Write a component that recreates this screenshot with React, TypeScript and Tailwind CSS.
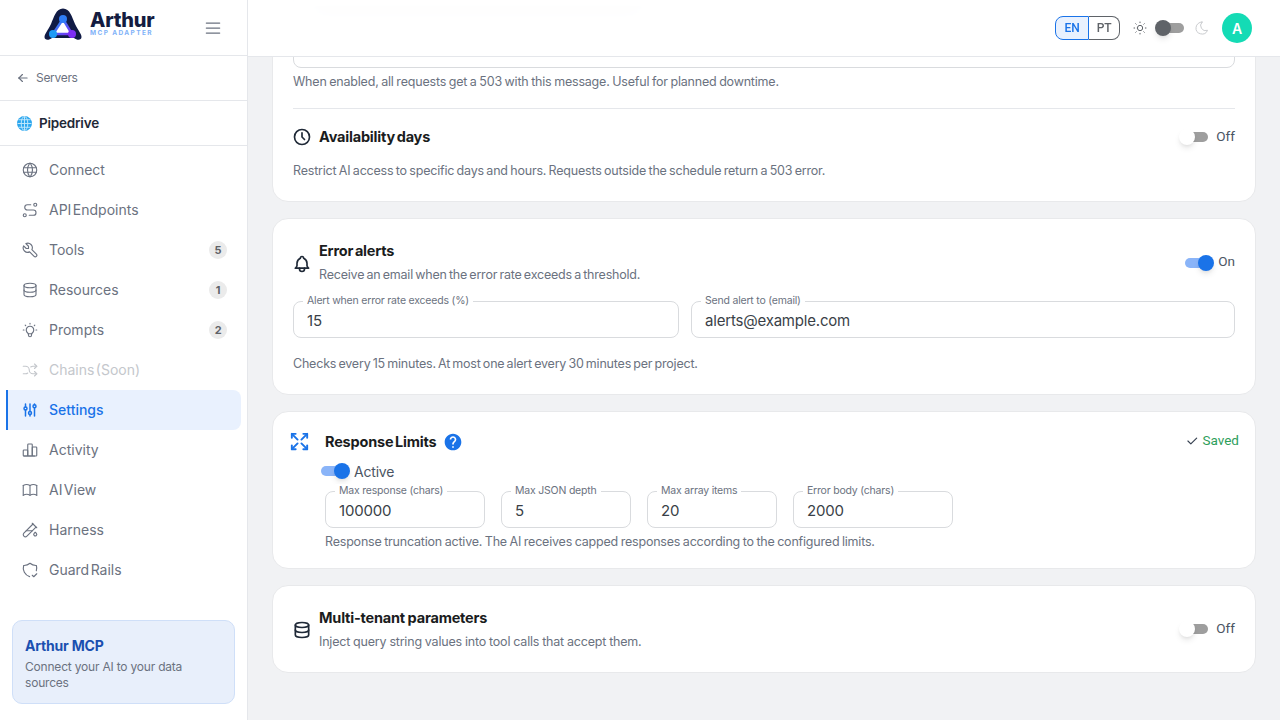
import { MdHelp } from "react-icons/md";
import {
  TbAdjustments,
  TbArrowLeft,
  TbArrowsMaximize,
  TbArrowsShuffle,
  TbBell,
  TbBook,
  TbBulb,
  TbChartBar,
  TbCheck,
  TbClock,
  TbDatabase,
  TbMenu2,
  TbMoon,
  TbRoute,
  TbShieldCheck,
  TbSun,
  TbTestPipe,
  TbTool,
  TbWorld,
} from "react-icons/tb";

const NAV = [
  { label: "Connect", icon: TbWorld },
  { label: "API Endpoints", icon: TbRoute },
  { label: "Tools", icon: TbTool, badge: 5 },
  { label: "Resources", icon: TbDatabase, badge: 1 },
  { label: "Prompts", icon: TbBulb, badge: 2 },
  { label: "Chains (Soon)", icon: TbArrowsShuffle, disabled: true },
  { label: "Settings", icon: TbAdjustments, active: true },
  { label: "Activity", icon: TbChartBar },
  { label: "AI View", icon: TbBook },
  { label: "Harness", icon: TbTestPipe },
  { label: "Guard Rails", icon: TbShieldCheck },
];

function Logo() {
  return (
    <div className="flex items-center gap-2 mb-[8px]">
      <svg width="38" height="32" viewBox="0 0 38 32">
        <defs>
          <linearGradient id="logo-edge" x1="0" y1="0" x2="1" y2="1">
            <stop offset="0" stopColor="#1e9bf5" />
            <stop offset="1" stopColor="#7c2df5" />
          </linearGradient>
        </defs>
        <path d="M0.5 29C0.5 26 4 22 7 16C10 9 12 0.5 19 0.5C26 0.5 28 9 31 16C34 22 37.5 26 37.5 29C37.5 32.5 33 32.5 30 30H8C5 32.5 0.5 32.5 0.5 29Z" fill="#101b45" />
        <path d="M19 11L9 26H28Z" fill="#fff" stroke="url(#logo-edge)" strokeWidth="2.5" />
        <circle cx="19" cy="11" r="4" fill="#2f7df6" />
        <circle cx="9" cy="26" r="4" fill="#1e9bf5" />
        <circle cx="28" cy="26" r="4" fill="#7c2df5" />
      </svg>
      <div className="flex flex-col">
        <span className="text-[20px] leading-[19px] font-extrabold text-[#141c40]">Arthur</span>
        <span className="text-[6.5px] leading-[7px] font-bold tracking-[1.4px] text-[#7fb2f8]">MCP ADAPTER</span>
      </div>
    </div>
  );
}

function Sidebar() {
  return (
    <aside className="w-[248px] h-full shrink-0 bg-white border-r border-[#e5e7eb] flex flex-col">
      <div className="h-14 shrink-0 border-b border-[#e5e7eb] flex items-center pl-11 pr-[24px] justify-between">
        <Logo />
        <TbMenu2 className="w-5 h-5 text-[#6b7280]" strokeWidth={1.5} />
      </div>
      <div className="h-[45px] shrink-0 border-b border-[#e5e7eb] flex items-center gap-[6px] pl-[16px] text-[12px] tracking-[-0.3px] text-[#6b7280]">
        <TbArrowLeft className="w-[14px] h-[14px]" />
        <span>Servers</span>
      </div>
      <div className="h-[45px] shrink-0 border-b border-[#e5e7eb] flex items-center gap-[7px] pl-[17px]">
        <svg width="15" height="15" viewBox="0 0 16 16" fill="none" stroke="#c4e9fc" strokeWidth="1">
          <circle cx="8" cy="8" r="8" fill="#2ba6ee" stroke="none" />
          <ellipse cx="8" cy="8" rx="3.5" ry="7.5" />
          <path d="M8 0.5V15.5M0.5 8H15.5M1.8 4H14.2M1.8 12H14.2" />
        </svg>
        <span className="text-[13.5px] font-semibold text-[#1f2937]">Pipedrive</span>
      </div>
      <nav className="flex flex-col pt-[4px] pl-[6px] pr-[6px]">
        {NAV.map((item) => {
          const Icon = item.icon;
          return (
            <div
              key={item.label}
              className={
                item.active
                  ? "h-10 flex items-center gap-[10px] pl-[13px] pr-[14px] bg-[#e9f1fe] rounded-r-lg border-l-2 border-[#1a73e8] text-[#1a73e8] font-medium"
                  : item.disabled
                    ? "h-10 flex items-center gap-[10px] pl-[15px] pr-[14px] text-[#c4c7cc]"
                    : "h-10 flex items-center gap-[10px] pl-[15px] pr-[14px] text-[#6b7280]"
              }
            >
              <Icon className="w-[18px] h-[18px] shrink-0" strokeWidth={item.active ? 2 : 1.5} />
              <span className="text-[14px] flex-1 whitespace-nowrap mb-[1px] tracking-normal [word-spacing:-2.5px]">{item.label}</span>
              {item.badge && (
                <span className="w-[18px] h-[18px] rounded-full bg-[#ebebeb] text-[11px] font-bold text-[#5f6368] flex items-center justify-center">
                  {item.badge}
                </span>
              )}
            </div>
          );
        })}
      </nav>
      <div className="mt-[30px] mx-[12px] h-[84px] rounded-[10px] bg-[#e8effb] border border-[#cfdff8] px-[12px] pt-[16px]">
        <div className="text-[14px] leading-[18px] font-bold text-[#1a4fb0]">Arthur MCP</div>
        <div className="mt-[4px] text-[12px] leading-[16px] text-[#6b7280]">Connect your AI to your data sources</div>
      </div>
    </aside>
  );
}

function Track({ on, knob }: { on?: boolean; knob: string }) {
  return (
    <div className={on ? "relative w-[24px] h-[10px] rounded-full bg-[#8ab4f8]" : "relative w-[24px] h-[10px] rounded-full bg-[#9e9e9e]"}>
      <div className={`absolute -top-[3px] w-4 h-4 rounded-full shadow-md ${on ? "-right-[5px]" : "-left-[5px]"} ${knob}`} />
    </div>
  );
}

function Toggle({ on, label }: { on?: boolean; label: string }) {
  return (
    <div className={on ? "flex items-center gap-[9px]" : "flex items-center gap-[8px]"}>
      <Track on={on} knob={on ? "bg-[#1a73e8]" : "bg-white"} />
      <span className="text-[13.5px] mb-[2px] tracking-normal text-[#4b5563] font-['Roboto',sans-serif]">{label}</span>
    </div>
  );
}

function Field({ label, value, className }: { label: string; value: string; className: string }) {
  return (
    <div className={`relative h-[37px] rounded-lg border border-[#d9dbde] flex items-center px-[13px] pt-[3px] ${className}`}>
      <span className="absolute -top-[8px] left-[9px] bg-white px-[4px] text-[10.5px] leading-[14px] text-[#6b7280] whitespace-nowrap">
        {label}
      </span>
      <span className="text-[15px] text-[#3a3f47]">{value}</span>
    </div>
  );
}

function Header() {
  return (
    <header className="absolute top-0 left-0 right-0 h-[57px] bg-white/95 backdrop-blur border-b border-[#e5e7eb] flex items-center justify-end pr-[28px]">
      <div className="flex items-center h-[24px] text-[12px] font-medium font-['Roboto',sans-serif]">
        <div className="h-full w-[34px] flex items-center justify-center rounded-l-lg border border-[#1a73e8] bg-[#e9f1fe] text-[#1a73e8]">EN</div>
        <div className="h-full w-[31px] flex items-center justify-center rounded-r-lg border border-l-0 border-[#5f6368] text-[#5f6368]">PT</div>
      </div>
      <TbSun className="ml-[12px] w-4 h-4 text-[#5f6368]" strokeWidth={1.5} />
      <div className="ml-[12px]">
        <Track knob="bg-[#5f6368]" />
      </div>
      <TbMoon className="ml-[10px] w-4 h-4 text-[#c9cbce]" strokeWidth={1.5} />
      <div className="ml-[12px] w-[30px] h-[30px] rounded-full bg-[#14dbb5] text-white text-[14px] font-semibold flex items-center justify-center">A</div>
    </header>
  );
}

export default function App() {
  return (
    <div className="w-[1280px] h-[720px] flex overflow-hidden bg-[#f1f2f4] font-['Inter',sans-serif] tracking-[-0.2px]">
      <Sidebar />
      <main className="relative flex-1 h-full overflow-hidden">
        <div className="h-full flex flex-col justify-end gap-[16px] px-[24px] pb-[47px]">
          <section className="shrink-0 bg-white rounded-2xl border border-[#e8e9eb] px-[20px] pb-[21px]">
            {/* message box, mostly scrolled under the header */}
            <div className="h-[90px] rounded-b-lg border border-[#d9dbde] pt-[27px] pl-[19px]">
              <div className="w-[330px] h-[10px] rounded bg-[#d1d5db]" />
            </div>
            <p className="mt-[5px] text-[12.5px] leading-[18px] text-[#6b7280] [word-spacing:-0.65px]">When enabled, all requests get a 503 with this message. Useful for planned downtime.</p>
            <div className="mt-[17px] border-t border-[#e5e7eb] pt-[17px] flex items-center justify-between h-[40px]">
              <div className="flex items-center gap-[7px] -ml-[1px]">
                <TbClock className="w-5 h-5 text-[#1f2937]" />
                <span className="text-[14.5px] font-bold text-[#1a1c20] [word-spacing:-1.5px]">Availability days</span>
              </div>
              <Toggle label="Off" />
            </div>
            <p className="mt-[14px] text-[12.5px] leading-[18px] text-[#6b7280] [word-spacing:-0.9px]">Restrict AI access to specific days and hours. Requests outside the schedule return a 503 error.</p>
          </section>

          <section className="shrink-0 h-[177px] bg-white rounded-2xl border border-[#e8e9eb] px-[20px] pt-[22px]">
            <div className="flex items-center justify-between">
              <div className="flex items-center gap-[7px] -ml-[1px]">
                <TbBell className="w-5 h-5 text-[#1f2937] mt-[2px]" />
                <div>
                  <div className="text-[14.5px] leading-[20px] font-bold text-[#1a1c20] [word-spacing:-1.5px]">Error alerts</div>
                  <div className="mt-[5px] text-[12.5px] leading-[18px] text-[#6b7280] [word-spacing:-1.1px]">Receive an email when the error rate exceeds a threshold.</div>
                </div>
              </div>
              <Toggle on label="On" />
            </div>
            <div className="mt-[17px] flex gap-[12px]">
              <Field label="Alert when error rate exceeds (%)" value="15" className="w-[386px]" />
              <Field label="Send alert to (email)" value="alerts@example.com" className="flex-1" />
            </div>
            <p className="mt-[17px] text-[12.5px] leading-[18px] text-[#6b7280] [word-spacing:-1.1px]">Checks every 15 minutes. At most one alert every 30 minutes per project.</p>
          </section>

          <section className="shrink-0 h-[158px] bg-white rounded-2xl border border-[#e8e9eb] pl-[15px] pr-[16px] pt-[20px] flex gap-[14px]">
            <TbArrowsMaximize className="w-[23px] h-[23px] text-[#1a73e8] -mt-[2px] shrink-0" />
            <div className="flex-1">
              <div className="flex items-center justify-between h-[20px]">
                <div className="flex items-center gap-[7px]">
                  <span className="text-[14.5px] leading-[20px] font-bold text-[#1a1c20] [word-spacing:-1.5px]">Response Limits</span>
                  <MdHelp className="w-5 h-5 text-[#1a73e8]" />
                </div>
                <div className="flex items-center gap-[4px] -mt-[3px] text-[13.5px] tracking-normal text-[#2e9e5b] font-['Roboto',sans-serif]">
                  <TbCheck className="w-[14px] h-[14px] text-[#374151]" />
                  <span>Saved</span>
                </div>
              </div>
              <div className="mt-[9px] -ml-[4px] flex items-center h-[20px] gap-[9px]">
                <Track on knob="bg-[#1a73e8]" />
                <span className="text-[14px] text-[#4b5563]">Active</span>
              </div>
              <div className="mt-[10px] flex gap-[16px]">
                <Field label="Max response (chars)" value="100000" className="w-[160px]" />
                <Field label="Max JSON depth" value="5" className="w-[130px]" />
                <Field label="Max array items" value="20" className="w-[130px]" />
                <Field label="Error body (chars)" value="2000" className="w-[160px]" />
              </div>
              <p className="mt-[5px] text-[12.5px] leading-[18px] text-[#6b7280] [word-spacing:-0.7px]">Response truncation active. The AI receives capped responses according to the configured limits.</p>
            </div>
          </section>

          <section className="shrink-0 h-[88px] bg-white rounded-2xl border border-[#e8e9eb] px-[20px] flex items-center justify-between">
            <div className="flex items-center gap-[7px] -ml-[1px]">
              <TbDatabase className="w-5 h-5 text-[#1f2937] mt-[2px]" />
              <div>
                <div className="text-[14.5px] leading-[20px] font-bold text-[#1a1c20] [word-spacing:-0.5px]">Multi-tenant parameters</div>
                <div className="mt-[5px] text-[12.5px] leading-[18px] text-[#6b7280] [word-spacing:-0.3px]">Inject query string values into tool calls that accept them.</div>
              </div>
            </div>
            <Toggle label="Off" />
          </section>
        </div>
        <Header />
      </main>
    </div>
  );
}
